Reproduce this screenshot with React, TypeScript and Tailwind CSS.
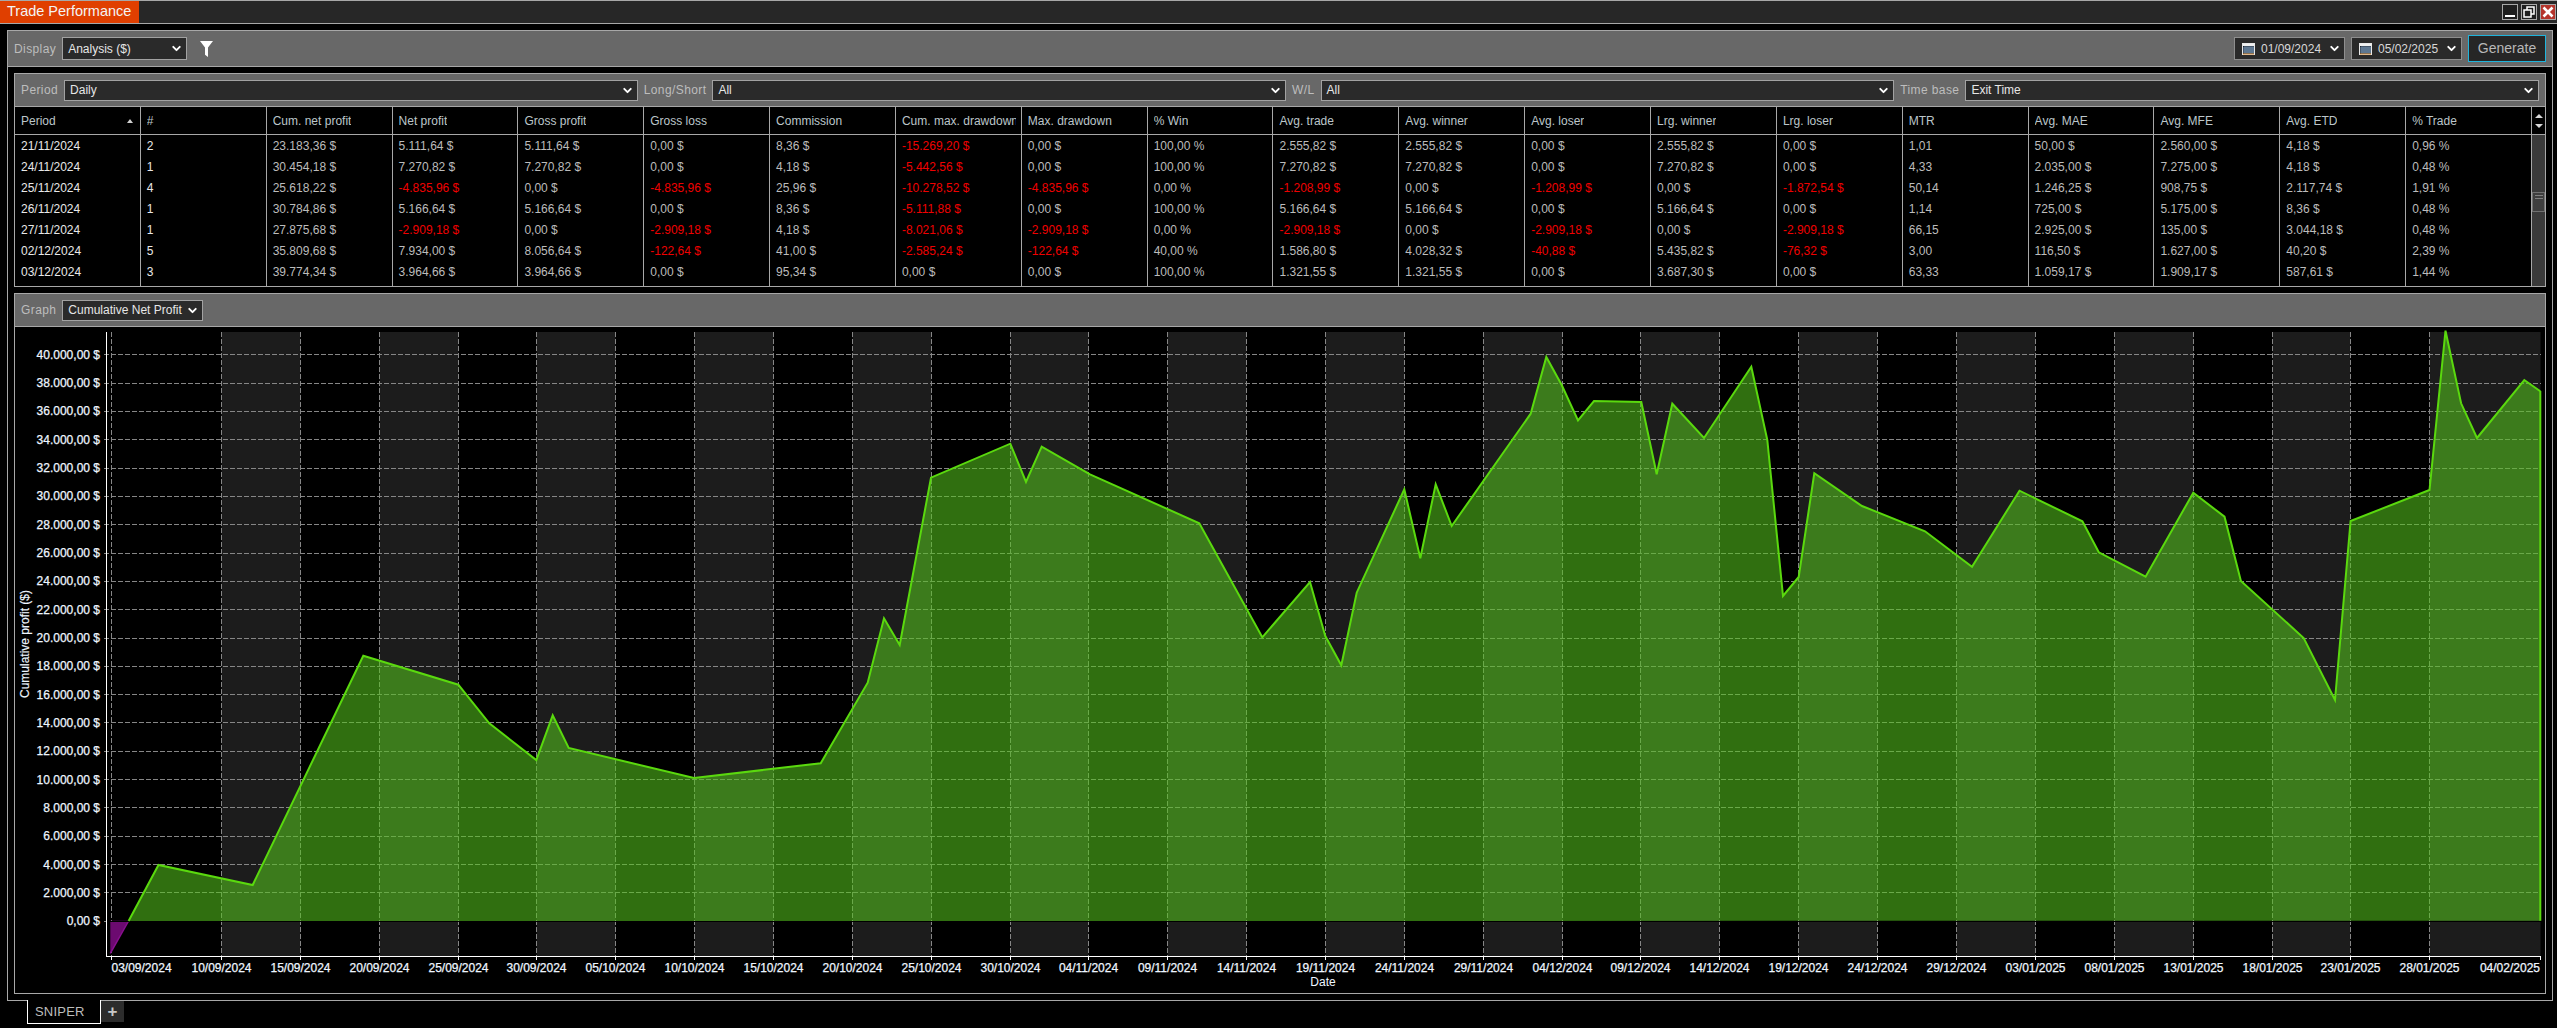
import { ChevronDown } from "lucide-react"

const columns = [
  "Period", "#", "Cum. net profit", "Net profit", "Gross profit", "Gross loss", "Commission",
  "Cum. max. drawdown", "Max. drawdown", "% Win", "Avg. trade", "Avg. winner", "Avg. loser",
  "Lrg. winner", "Lrg. loser", "MTR", "Avg. MAE", "Avg. MFE", "Avg. ETD", "% Trade",
]

const rows = [
  ["21/11/2024", "2", "23.183,36 $", "5.111,64 $", "5.111,64 $", "0,00 $", "8,36 $", "-15.269,20 $", "0,00 $", "100,00 %", "2.555,82 $", "2.555,82 $", "0,00 $", "2.555,82 $", "0,00 $", "1,01", "50,00 $", "2.560,00 $", "4,18 $", "0,96 %"],
  ["24/11/2024", "1", "30.454,18 $", "7.270,82 $", "7.270,82 $", "0,00 $", "4,18 $", "-5.442,56 $", "0,00 $", "100,00 %", "7.270,82 $", "7.270,82 $", "0,00 $", "7.270,82 $", "0,00 $", "4,33", "2.035,00 $", "7.275,00 $", "4,18 $", "0,48 %"],
  ["25/11/2024", "4", "25.618,22 $", "-4.835,96 $", "0,00 $", "-4.835,96 $", "25,96 $", "-10.278,52 $", "-4.835,96 $", "0,00 %", "-1.208,99 $", "0,00 $", "-1.208,99 $", "0,00 $", "-1.872,54 $", "50,14", "1.246,25 $", "908,75 $", "2.117,74 $", "1,91 %"],
  ["26/11/2024", "1", "30.784,86 $", "5.166,64 $", "5.166,64 $", "0,00 $", "8,36 $", "-5.111,88 $", "0,00 $", "100,00 %", "5.166,64 $", "5.166,64 $", "0,00 $", "5.166,64 $", "0,00 $", "1,14", "725,00 $", "5.175,00 $", "8,36 $", "0,48 %"],
  ["27/11/2024", "1", "27.875,68 $", "-2.909,18 $", "0,00 $", "-2.909,18 $", "4,18 $", "-8.021,06 $", "-2.909,18 $", "0,00 %", "-2.909,18 $", "0,00 $", "-2.909,18 $", "0,00 $", "-2.909,18 $", "66,15", "2.925,00 $", "135,00 $", "3.044,18 $", "0,48 %"],
  ["02/12/2024", "5", "35.809,68 $", "7.934,00 $", "8.056,64 $", "-122,64 $", "41,00 $", "-2.585,24 $", "-122,64 $", "40,00 %", "1.586,80 $", "4.028,32 $", "-40,88 $", "5.435,82 $", "-76,32 $", "3,00", "116,50 $", "1.627,00 $", "40,20 $", "2,39 %"],
  ["03/12/2024", "3", "39.774,34 $", "3.964,66 $", "3.964,66 $", "0,00 $", "95,34 $", "0,00 $", "0,00 $", "100,00 %", "1.321,55 $", "1.321,55 $", "0,00 $", "3.687,30 $", "0,00 $", "63,33", "1.059,17 $", "1.909,17 $", "587,61 $", "1,44 %"],
]

const ticks: [number, string][] = [
  [111.5, "03/09/2024"], [221.5, "10/09/2024"], [300.5, "15/09/2024"], [379.5, "20/09/2024"],
  [458.5, "25/09/2024"], [536.5, "30/09/2024"], [615.5, "05/10/2024"], [694.5, "10/10/2024"],
  [773.5, "15/10/2024"], [852.5, "20/10/2024"], [931.5, "25/10/2024"], [1010.5, "30/10/2024"],
  [1088.5, "04/11/2024"], [1167.5, "09/11/2024"], [1246.5, "14/11/2024"], [1325.5, "19/11/2024"],
  [1404.5, "24/11/2024"], [1483.5, "29/11/2024"], [1562.5, "04/12/2024"], [1640.5, "09/12/2024"],
  [1719.5, "14/12/2024"], [1798.5, "19/12/2024"], [1877.5, "24/12/2024"], [1956.5, "29/12/2024"],
  [2035.5, "03/01/2025"], [2114.5, "08/01/2025"], [2193.5, "13/01/2025"], [2272.5, "18/01/2025"],
  [2350.5, "23/01/2025"], [2429.5, "28/01/2025"],
]

const points = [
  [128.6, 921], [158.5, 865], [252.7, 885], [363.3, 655.7], [458.3, 684.7], [489.3, 723.3],
  [536.3, 760], [552.7, 715.3], [568.7, 748], [694, 778], [820.7, 763.3], [867.7, 682.7],
  [884, 618.3], [899.7, 645], [931, 477.7], [1010.3, 443.7], [1026, 482], [1041.7, 446.7],
  [1090, 474.3], [1199.3, 523.3], [1262.3, 637.3], [1310, 582], [1325.3, 636], [1341.3, 665.3],
  [1356.7, 592.7], [1404.3, 489.3], [1420.3, 558.3], [1435.7, 484.3], [1451.7, 526],
  [1530.7, 413.7], [1546.3, 357], [1561.7, 385], [1578, 420.3], [1594, 401], [1641.3, 402],
  [1656.7, 474.3], [1672.3, 403.7], [1704, 438], [1751.3, 366.7], [1767.3, 440], [1783, 596],
  [1798.7, 577], [1814.3, 473.3], [1862, 506], [1925, 531.3], [1972, 566.7], [2019.5, 490.7],
  [2082.4, 521.3], [2098.8, 552.3], [2145.6, 576.7], [2193.3, 492.7], [2224.5, 516.7],
  [2240.9, 581], [2303.7, 638], [2335, 700], [2350.6, 521], [2429.5, 490], [2445.5, 330.7],
  [2461.1, 403.3], [2477, 438], [2524.3, 380], [2540.3, 391.3],
]

const plot = { left: 106.5, right: 2540.5, top: 332, bottom: 956, zero: 920.8 }
const linePoints = points.map((p) => p.join(",")).join(" ")
const areaPoints = `${linePoints} 2540.3,${plot.zero}`

const bands = ticks
  .map(([x], i) => [x, i + 1 < ticks.length ? ticks[i + 1][0] : plot.right])
  .filter((_, i) => i % 2 === 1)

const profitLabels = Array.from({ length: 21 }, (_, i) => i * 2000)
const money = (v: number) => `${v === 0 ? "0" : `${Math.floor(v / 1000)}.000`},00 $`
const yFor = (v: number) => plot.zero - v * 0.014165

function Select({ value, className }: { value: string; className: string }) {
  return (
    <div className={`flex items-center justify-between border border-[#a2a2a2] bg-[#2a2a2a] pl-[5px] pr-[3px] text-[#e6e6e6] ${className}`}>
      <span className="whitespace-nowrap">{value}</span>
      <ChevronDown size={13} strokeWidth={3.5} className="shrink-0 text-white" />
    </div>
  )
}

function Filter({ label, value }: { label: string; value: string }) {
  return (
    <>
      <span className="mx-[6px] whitespace-nowrap tracking-[0.4px] text-[#bdbdbd]">{label}</span>
      <Select value={value} className="h-[21px] min-w-0 flex-1" />
    </>
  )
}

function CalendarIcon() {
  return (
    <svg width="13" height="12" viewBox="0 0 13 12" className="shrink-0">
      <rect x="0.5" y="0.5" width="12" height="11" fill="#1c2430" stroke="#e8e8e8" />
      <rect x="1" y="1" width="11" height="2" fill="#f0f0f0" />
      <path d="M1 5h11M1 7h11M1 9h11M3 3v8M5 3v8M7 3v8M9 3v8M11 3v8" stroke="#8fb4d8" strokeWidth="0.7" />
      <path d="M1 11h11" stroke="#d98a30" strokeWidth="1" />
    </svg>
  )
}

function DatePicker({ value }: { value: string }) {
  return (
    <div className="flex h-[23px] w-[111px] items-center gap-[6px] border border-[#8e8e8e] bg-[#2a2a2a] pl-[7px] text-[#d8d8d8]">
      <CalendarIcon />
      <span>{value}</span>
      <ChevronDown size={13} strokeWidth={3.5} className="ml-auto mr-[3px] text-white" />
    </div>
  )
}

function WindowButton({ children, className = "bg-[#1e1e1e]" }: { children: React.ReactNode; className?: string }) {
  return (
    <div className={`flex h-[16px] w-[16px] items-center justify-center border border-[#a8a8a8] ${className}`}>
      {children}
    </div>
  )
}

function Chart() {
  return (
    <svg viewBox="15 327 2530 666" width="2530" height="666" className="block">
      {bands.map(([a, b]) => (
        <rect key={a} x={a} y={plot.top} width={b - a} height={plot.bottom - plot.top} fill="#1c1c1c" />
      ))}
      {profitLabels.map((v) => (
        <line key={v} x1={plot.left - 3} x2={plot.right} y1={yFor(v) + 0.5} y2={yFor(v) + 0.5} stroke="#868686" strokeDasharray="5 2" shapeRendering="crispEdges" />
      ))}
      {ticks.map(([x]) => (
        <line key={x} x1={x} x2={x} y1={plot.top} y2={plot.bottom} stroke="#868686" strokeDasharray="5 2" shapeRendering="crispEdges" />
      ))}
      <polygon points={areaPoints} fill="#54c31c" fillOpacity="0.57" />
      <polygon points={`110.3,${plot.zero} 128.6,${plot.zero} 110.3,953.3`} fill="#6c0a70" />
      <line x1="110.3" x2="128.6" y1="953.3" y2="921" stroke="#8a1090" strokeWidth="1.5" />
      <line x1="107" x2={plot.right} y1={plot.zero + 0.5} y2={plot.zero + 0.5} stroke="#000" shapeRendering="crispEdges" />
      <polyline points={linePoints} fill="none" stroke="#5ad90e" strokeWidth="2" />
      <line x1="2540.3" x2="2540.3" y1="391" y2={plot.zero} stroke="#5ad90e" strokeWidth="2" />
      <line x1={plot.left} x2={plot.left} y1={plot.top} y2={plot.bottom + 1} stroke="#fff" shapeRendering="crispEdges" />
      <line x1={plot.left} x2={plot.right} y1={plot.bottom} y2={plot.bottom} stroke="#fff" shapeRendering="crispEdges" />
      {[...ticks, [2540.5, ""] as [number, string]].map(([x]) => (
        <line key={x} x1={x} x2={x} y1={plot.bottom} y2={plot.bottom + 4} stroke="#fff" shapeRendering="crispEdges" />
      ))}
      <g fill="#eef6ff" fontSize="12" stroke="#eef6ff" strokeWidth="0.25">
        {profitLabels.map((v) => (
          <text key={v} x="100" y={yFor(v) + 4.5} textAnchor="end">{money(v)}</text>
        ))}
        {ticks.map(([x, label], i) => (
          <text key={label} x={i === 0 ? 111.5 : x} y="972" textAnchor={i === 0 ? "start" : "middle"}>{label}</text>
        ))}
        <text x="2540" y="972" textAnchor="end">04/02/2025</text>
        <text x="1323" y="986" textAnchor="middle" strokeWidth="0">Date</text>
        <text x="0" y="0" textAnchor="middle" strokeWidth="0.15" transform="translate(29 644) rotate(-90)">Cumulative profit ($)</text>
      </g>
    </svg>
  )
}

export default function App() {
  return (
    <div className="flex h-[1028px] w-[2557px] flex-col overflow-hidden bg-black text-[12px] [font-family:'Liberation_Sans',Arial,sans-serif]">
      <div className="flex h-[24px] shrink-0 items-stretch border-y border-[#a8a8a8] bg-[#272727]">
        <div className="flex w-[139px] items-center bg-[#e03f00] pl-[7px] text-[14.5px] text-[#f4f4f4]">Trade Performance</div>
        <div className="ml-auto flex items-center gap-[3px] pr-[1px]">
          <WindowButton>
            <span className="mt-[8px] h-[2px] w-[10px] bg-white" />
          </WindowButton>
          <WindowButton>
            <svg width="12" height="12" viewBox="0 0 12 12" fill="none" stroke="#fff" strokeWidth="1.5">
              <rect x="4" y="1" width="7" height="7" />
              <rect x="1" y="4" width="7" height="7" fill="#1e1e1e" />
            </svg>
          </WindowButton>
          <WindowButton className="bg-[#b5352c]">
            <svg width="12" height="12" viewBox="0 0 12 12" stroke="#fff" strokeWidth="2.6">
              <path d="M1.5 1.5l9 9M10.5 1.5l-9 9" />
            </svg>
          </WindowButton>
        </div>
      </div>

      <div className="ml-[7px] mt-[6px] flex h-[971px] w-[2546px] shrink-0 flex-col border border-[#a8a8a8] pb-[6px]">
        <div className="flex h-[36px] shrink-0 items-center border-b border-[#a8a8a8] bg-[#686868] pl-[6px] pr-[6px]">
          <span className="mr-[6px] tracking-[0.4px] text-[#bdbdbd]">Display</span>
          <Select value="Analysis ($)" className="h-[23px] w-[125px]" />
          <svg width="13" height="16" viewBox="0 0 13 16" className="ml-[13px]" fill="#fff">
            <path d="M0 0h13L8 6.5V16l-3-2.2V6.5z" />
          </svg>
          <div className="ml-auto flex items-center gap-[6px]">
            <DatePicker value="01/09/2024" />
            <DatePicker value="05/02/2025" />
            <div className="flex h-[27px] w-[78px] items-center justify-center border border-[#1fb4dc] bg-[#262626] text-[14px] text-[#b8b8b8]">Generate</div>
          </div>
        </div>

        <div className="mx-[6px] mt-[6px] flex h-[214px] shrink-0 flex-col border border-[#a8a8a8]">
          <div className="flex h-[33px] shrink-0 items-center border-b border-[#a8a8a8] bg-[#686868] pr-[6px]">
            <Filter label="Period" value="Daily" />
            <Filter label="Long/Short" value="All" />
            <Filter label="W/L" value="All" />
            <Filter label="Time base" value="Exit Time" />
          </div>
          <div className="flex min-h-0 flex-1">
            <div className="min-w-0 flex-1">
              <div className="grid h-[28px] grid-cols-[repeat(20,minmax(0,1fr))] border-b border-[#a8a8a8]">
                {columns.map((col, i) => (
                  <div key={col} className="relative flex items-center border-r border-[#a8a8a8] pl-[6px] pr-[5px] text-[#bcc6ca]">
                    <span className="overflow-hidden whitespace-nowrap">{col}</span>
                    {i === 0 && <span className="absolute right-[7px] top-[12px] h-0 w-0 border-x-[3px] border-b-[4px] border-x-transparent border-b-[#d0d0d0]" />}
                  </div>
                ))}
              </div>
              <div className="grid h-[151px] grid-cols-[repeat(20,minmax(0,1fr))] grid-rows-[repeat(7,21px)_1fr]">
                {rows.map((row) =>
                  row.map((cell, i) => (
                    <div
                      key={`${row[0]}-${i}`}
                      className={`flex items-center whitespace-nowrap border-r border-[#a8a8a8] pl-[6px] ${
                        cell.startsWith("-") ? "text-[#f00000]" : i < 2 ? "text-[#e8e8e8]" : "text-[#bcbcbc]"
                      }`}
                    >
                      {cell}
                    </div>
                  ))
                )}
                {columns.map((col) => (
                  <div key={col} className="border-r border-[#a8a8a8]" />
                ))}
              </div>
            </div>
            <div className="flex w-[13px] shrink-0 flex-col bg-[#3a3a3a]">
              <div className="flex h-[28px] shrink-0 flex-col items-center justify-center gap-[6px] border-b border-[#a8a8a8] bg-black">
                <span className="h-0 w-0 border-x-[4px] border-b-[4px] border-x-transparent border-b-[#d8d8d8]" />
                <span className="h-0 w-0 border-x-[4px] border-t-[4px] border-x-transparent border-t-[#d8d8d8]" />
              </div>
              <div className="mt-[57px] flex h-[20px] flex-col items-center gap-[2px] border border-[#707070] bg-[#3e3e3e] pt-[2px]">
                <span className="h-px w-[8px] bg-[#808080]" />
                <span className="h-px w-[8px] bg-[#808080]" />
              </div>
            </div>
          </div>
        </div>

        <div className="mx-[6px] mt-[6px] flex min-h-0 flex-1 flex-col overflow-hidden border border-[#a8a8a8]">
          <div className="flex h-[33px] shrink-0 items-center border-b border-[#a8a8a8] bg-[#686868]">
            <span className="mx-[6px] tracking-[0.4px] text-[#bdbdbd]">Graph</span>
            <Select value="Cumulative Net Profit" className="h-[21px] w-[141px]" />
          </div>
          <Chart />
        </div>
      </div>

      <div className="flex shrink-0 pl-[27px]">
        <div className="relative -mt-px flex h-[24px] w-[74px] items-center border-x border-b border-white bg-black pl-[7px] text-[13px] tracking-[0.2px] text-[#bdbdbd]">SNIPER</div>
        <div className="flex h-[21px] w-[23px] items-center justify-center bg-[#2c2c2c] text-[17px] font-bold leading-none text-[#c8c8c8]">+</div>
      </div>
    </div>
  )
}
